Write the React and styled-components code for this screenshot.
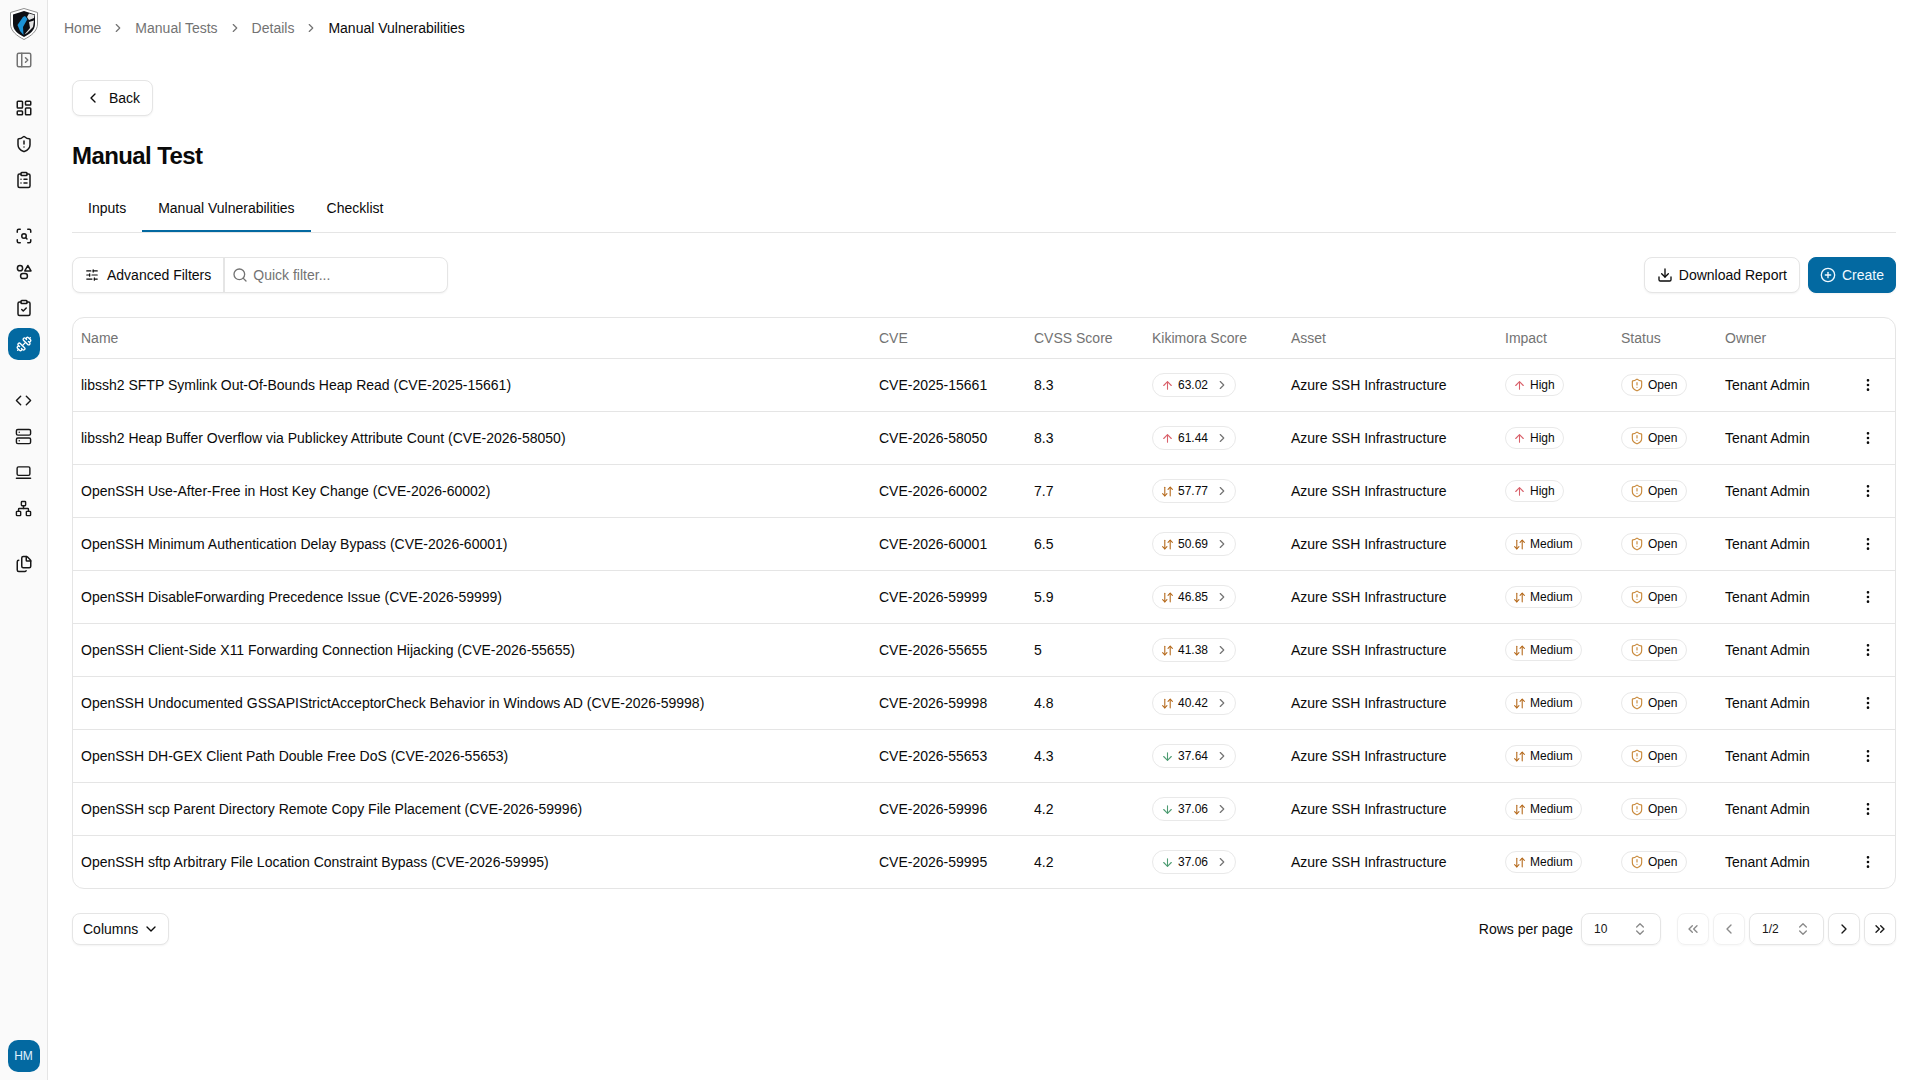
import styled, { createGlobalStyle } from "styled-components";
import {
  PanelLeftOpen,
  LayoutDashboard,
  ShieldAlert,
  ClipboardList,
  ScanSearch,
  ClipboardCheck,
  Dumbbell,
  Code,
  Server,
  LaptopMinimal,
  Network,
  Files,
  ChevronRight,
  ChevronLeft,
  ChevronDown,
  ChevronsLeft,
  ChevronsRight,
  ChevronsUpDown,
  SlidersHorizontal,
  Search,
  Download,
  CirclePlus,
  ArrowUp,
  ArrowDown,
  ArrowDownUp,
  EllipsisVertical,
} from "lucide-react";

const GlobalStyle = createGlobalStyle`
  * { box-sizing: border-box; }
  html, body { margin: 0; padding: 0; background: #fff; }
  body {
    font-family: "Liberation Sans", Arial, sans-serif;
    font-size: 14px;
    color: #0a0a0a;
  }
`;

const PRIMARY = "#0369a1";

const rows = [
  ["libssh2 SFTP Symlink Out-Of-Bounds Heap Read (CVE-2025-15661)", "CVE-2025-15661", "8.3", "up", "63.02", "High"],
  ["libssh2 Heap Buffer Overflow via Publickey Attribute Count (CVE-2026-58050)", "CVE-2026-58050", "8.3", "up", "61.44", "High"],
  ["OpenSSH Use-After-Free in Host Key Change (CVE-2026-60002)", "CVE-2026-60002", "7.7", "mid", "57.77", "High"],
  ["OpenSSH Minimum Authentication Delay Bypass (CVE-2026-60001)", "CVE-2026-60001", "6.5", "mid", "50.69", "Medium"],
  ["OpenSSH DisableForwarding Precedence Issue (CVE-2026-59999)", "CVE-2026-59999", "5.9", "mid", "46.85", "Medium"],
  ["OpenSSH Client-Side X11 Forwarding Connection Hijacking (CVE-2026-55655)", "CVE-2026-55655", "5", "mid", "41.38", "Medium"],
  ["OpenSSH Undocumented GSSAPIStrictAcceptorCheck Behavior in Windows AD (CVE-2026-59998)", "CVE-2026-59998", "4.8", "mid", "40.42", "Medium"],
  ["OpenSSH DH-GEX Client Path Double Free DoS (CVE-2026-55653)", "CVE-2026-55653", "4.3", "down", "37.64", "Medium"],
  ["OpenSSH scp Parent Directory Remote Copy File Placement (CVE-2026-59996)", "CVE-2026-59996", "4.2", "down", "37.06", "Medium"],
  ["OpenSSH sftp Arbitrary File Location Constraint Bypass (CVE-2026-59995)", "CVE-2026-59995", "4.2", "down", "37.06", "Medium"],
];

const Page = styled.div`
  display: flex;
  min-height: 1080px;
`;

const Sidebar = styled.aside`
  flex: 0 0 48px;
  height: 1080px;
  background: #fafafa;
  border-right: 1px solid #e5e5e5;
  display: flex;
  flex-direction: column;
  align-items: center;
  padding: 8px 0;
`;

const RailGroup = styled.div`
  display: flex;
  flex-direction: column;
  align-items: center;
  margin-top: ${(p) => p.$top || 0}px;
`;

const RailItem = styled.div`
  width: 32px;
  height: ${(p) => (p.$active ? 32 : 36)}px;
  margin: ${(p) => (p.$active ? "2px 0" : "0")};
  border-radius: 10px;
  display: flex;
  align-items: center;
  justify-content: center;
  background: ${(p) => (p.$active ? PRIMARY : "transparent")};
  color: ${(p) => (p.$active ? "#fff" : "#171717")};
`;

const Avatar = styled.div`
  width: 32px;
  height: 32px;
  margin-top: auto;
  border-radius: 10px;
  background: ${PRIMARY};
  color: #e0f2fe;
  font-size: 12px;
  display: flex;
  align-items: center;
  justify-content: center;
`;

const Main = styled.main`
  flex: 1;
  min-width: 0;
`;

const Crumbs = styled.nav`
  height: 56px;
  padding-left: 16px;
  display: flex;
  align-items: center;
  gap: 10px;
  color: #737373;
  line-height: 20px;
`;

const CurrentCrumb = styled.span`
  color: #0a0a0a;
`;

const Content = styled.div`
  padding: 24px 24px 0;
`;

const OutlineButton = styled.button`
  height: 36px;
  padding: 0 12px;
  border: 1px solid #e5e5e5;
  border-radius: 8px;
  background: #fff;
  box-shadow: 0 1px 2px rgba(0, 0, 0, 0.05);
  font: inherit;
  color: #0a0a0a;
  display: inline-flex;
  align-items: center;
  gap: ${(p) => p.$gap || 8}px;
`;

const Title = styled.h1`
  margin: 24px 0 0;
  font-size: 24px;
  line-height: 32px;
  font-weight: 700;
  letter-spacing: -0.6px;
`;

const Tabs = styled.div`
  display: flex;
  margin-top: 18px;
  border-bottom: 1px solid #e5e5e5;
`;

const Tab = styled.div`
  height: 42px;
  padding: 0 16px 4px;
  display: flex;
  align-items: center;
  color: #0a0a0a;
  border-bottom: 2px solid ${(p) => (p.$active ? PRIMARY : "transparent")};
`;

const Toolbar = styled.div`
  display: flex;
  align-items: center;
  justify-content: space-between;
  margin-top: 24px;
`;

const FilterGroup = styled.div`
  display: flex;
  width: 376px;
  height: 36px;
  border: 1px solid #e5e5e5;
  border-radius: 8px;
  background: #fff;
  box-shadow: 0 1px 2px rgba(0, 0, 0, 0.05);
`;

const FilterButton = styled.div`
  padding: 0 12px;
  display: flex;
  align-items: center;
  gap: 8px;
  border-right: 2px solid #e5e5e5;
`;

const QuickFilter = styled.div`
  flex: 1;
  padding: 0 7px;
  display: flex;
  align-items: center;
  gap: 5px;
  color: #737373;
`;

const Actions = styled.div`
  display: flex;
  gap: 8px;
`;

const PrimaryButton = styled(OutlineButton)`
  padding: 0 11px;
  border-color: ${PRIMARY};
  background: ${PRIMARY};
  color: #f0f9ff;
`;

const TableBox = styled.div`
  margin-top: 24px;
  border: 1px solid #e5e5e5;
  border-radius: 12px;
  overflow: hidden;
`;

const Row = styled.div`
  display: grid;
  grid-template-columns: 798px 155px 118px 139px 214px 116px 104px 135px 1fr;
  align-items: center;
  height: ${(p) => (p.$head ? 40 : 53)}px;
  border-top: ${(p) => (p.$head ? "none" : "1px solid #e5e5e5")};
  color: ${(p) => (p.$head ? "#737373" : "#0a0a0a")};
`;

const Cell = styled.div`
  padding: 0 8px;
  white-space: nowrap;
`;

const Pill = styled.span`
  display: inline-flex;
  align-items: center;
  height: ${(p) => (p.$score ? 24 : 22)}px;
  padding: 0 ${(p) => p.$right}px 0 ${(p) => p.$left}px;
  gap: 4px;
  border: 1px solid #e9e9e9;
  border-radius: 999px;
  background: #fff;
  font-size: 12px;
  color: #0a0a0a;
`;

const Muted = styled.span`
  display: inline-flex;
  margin-left: 3px;
  color: #737373;
`;

const DotsButton = styled.span`
  display: flex;
`;

const Footer = styled.div`
  display: flex;
  align-items: center;
  justify-content: space-between;
  margin-top: 24px;
`;

const ColumnsButton = styled(OutlineButton)`
  height: 32px;
  padding: 0 9px 0 10px;
`;

const Pager = styled.div`
  display: flex;
  align-items: center;
`;

const PagerLabel = styled.span`
  margin-right: 8px;
`;

const SelectBox = styled.div`
  width: ${(p) => p.$w}px;
  height: 32px;
  margin-right: ${(p) => p.$gap || 0}px;
  padding: 0 12px;
  border: 1px solid #e5e5e5;
  border-radius: 8px;
  box-shadow: 0 1px 2px rgba(0, 0, 0, 0.05);
  font-size: 12px;
  display: flex;
  align-items: center;
  justify-content: space-between;
  color: #171717;
  svg { color: #8a8a8a; }
`;

const PageButton = styled.div`
  width: 32px;
  height: 32px;
  margin-right: ${(p) => p.$gap || 0}px;
  border: 1px solid #e5e5e5;
  border-radius: 8px;
  box-shadow: 0 1px 2px rgba(0, 0, 0, 0.05);
  display: flex;
  align-items: center;
  justify-content: center;
  color: #171717;
  opacity: ${(p) => (p.$off ? 0.5 : 1)};
`;

function Logo() {
  return (
    <svg width="30" height="32" viewBox="0 0 30 32">
      <path d="M15 0.5 L28.5 4.5 L28.5 16 C28.5 23 22 28 15 31.5 C8 28 1.5 23 1.5 16 L1.5 4.5 Z" fill="#fff" stroke="#8f8f8f" strokeWidth="1" />
      <path d="M15 3 L26 6.5 L26 16 C26 22 21 26 15 29 C9 26 4 22 4 16 L4 6.5 Z" fill="#0d0f14" />
      <path d="M16 8 L14 9 L8.5 17 L11 23 L14.5 27 L14 19 L18.5 11 Z" fill="#1c93d6" />
      <path d="M20 5.5 L25.5 7 L25 10 L20 12 L18 9 Z" fill="#e4e4e4" />
      <path d="M20 14 L25 12.5 L24 19 L18 25 L15.5 26.5 L21 20 Z" fill="#e4e4e4" />
    </svg>
  );
}

// circle, triangle and rounded square, none of the icon packs has them this way round
function ShapesIcon() {
  return (
    <svg width="16" height="16" viewBox="0 0 16 16" fill="none" stroke="currentColor" strokeWidth="1.5" strokeLinejoin="round">
      <circle cx="4" cy="4.2" r="2.6" />
      <path d="M11.8 1.5 L15 6.9 L8.8 6.9 Z" />
      <rect x="4.6" y="9.6" width="6.8" height="5" rx="2.3" />
    </svg>
  );
}

const trendIcon = { up: ArrowUp, mid: ArrowDownUp, down: ArrowDown };
const trendColor = { up: "#d9606a", mid: "#b4681a", down: "#4d9c72" };

function Trend({ kind }) {
  const Icon = trendIcon[kind];
  return <Icon size={13} color={trendColor[kind]} />;
}

export default function App() {
  return (
    <Page>
      <GlobalStyle />
      <Sidebar>
        <Logo />
        <RailGroup $top={2}>
          <RailItem><PanelLeftOpen size={18} color="#737373" /></RailItem>
        </RailGroup>
        <RailGroup $top={12}>
          <RailItem><LayoutDashboard size={18} /></RailItem>
          <RailItem><ShieldAlert size={18} /></RailItem>
          <RailItem><ClipboardList size={18} /></RailItem>
        </RailGroup>
        <RailGroup $top={20}>
          <RailItem><ScanSearch size={18} /></RailItem>
          <RailItem><ShapesIcon /></RailItem>
          <RailItem><ClipboardCheck size={18} /></RailItem>
          <RailItem $active><Dumbbell size={16} /></RailItem>
        </RailGroup>
        <RailGroup $top={20}>
          <RailItem><Code size={17} /></RailItem>
          <RailItem><Server size={17} /></RailItem>
          <RailItem><LaptopMinimal size={17} /></RailItem>
          <RailItem><Network size={17} /></RailItem>
        </RailGroup>
        <RailGroup $top={20}>
          <RailItem><Files size={18} /></RailItem>
        </RailGroup>
        <Avatar>HM</Avatar>
      </Sidebar>
      <Main>
        <Crumbs>
          <span>Home</span>
          <ChevronRight size={14} />
          <span>Manual Tests</span>
          <ChevronRight size={14} />
          <span>Details</span>
          <ChevronRight size={14} />
          <CurrentCrumb>Manual Vulnerabilities</CurrentCrumb>
        </Crumbs>
        <Content>
          <OutlineButton><ChevronLeft size={16} />Back</OutlineButton>
          <Title>Manual Test</Title>
          <Tabs>
            <Tab>Inputs</Tab>
            <Tab $active>Manual Vulnerabilities</Tab>
            <Tab>Checklist</Tab>
          </Tabs>
          <Toolbar>
            <FilterGroup>
              <FilterButton><SlidersHorizontal size={14} />Advanced Filters</FilterButton>
              <QuickFilter><Search size={16} />Quick filter...</QuickFilter>
            </FilterGroup>
            <Actions>
              <OutlineButton $gap={6}><Download size={16} />Download Report</OutlineButton>
              <PrimaryButton $gap={6}><CirclePlus size={16} />Create</PrimaryButton>
            </Actions>
          </Toolbar>
          <TableBox>
            <Row $head>
              {["Name", "CVE", "CVSS Score", "Kikimora Score", "Asset", "Impact", "Status", "Owner", ""].map((h) => (
                <Cell key={h}>{h}</Cell>
              ))}
            </Row>
            {rows.map(([name, cve, cvss, trend, score, impact]) => (
              <Row key={name}>
                <Cell>{name}</Cell>
                <Cell>{cve}</Cell>
                <Cell>{cvss}</Cell>
                <Cell>
                  <Pill $score $left={8} $right={6}>
                    <Trend kind={trend} />
                    {score}
                    <Muted><ChevronRight size={14} /></Muted>
                  </Pill>
                </Cell>
                <Cell>Azure SSH Infrastructure</Cell>
                <Cell>
                  <Pill $left={7} $right={8}>
                    <Trend kind={impact === "High" ? "up" : "mid"} />
                    {impact}
                  </Pill>
                </Cell>
                <Cell>
                  <Pill $left={8} $right={9}>
                    <ShieldAlert size={14} color="#c98a3c" />
                    Open
                  </Pill>
                </Cell>
                <Cell>Tenant Admin</Cell>
                <Cell><DotsButton><EllipsisVertical size={16} /></DotsButton></Cell>
              </Row>
            ))}
          </TableBox>
          <Footer>
            <ColumnsButton $gap={5}>Columns<ChevronDown size={16} /></ColumnsButton>
            <Pager>
              <PagerLabel>Rows per page</PagerLabel>
              <SelectBox $w={80} $gap={16}>10<ChevronsUpDown size={16} /></SelectBox>
              <PageButton $off $gap={4}><ChevronsLeft size={16} /></PageButton>
              <PageButton $off $gap={4}><ChevronLeft size={16} /></PageButton>
              <SelectBox $w={75} $gap={4}>1/2<ChevronsUpDown size={16} /></SelectBox>
              <PageButton $gap={4}><ChevronRight size={16} /></PageButton>
              <PageButton><ChevronsRight size={16} /></PageButton>
            </Pager>
          </Footer>
        </Content>
      </Main>
    </Page>
  );
}
